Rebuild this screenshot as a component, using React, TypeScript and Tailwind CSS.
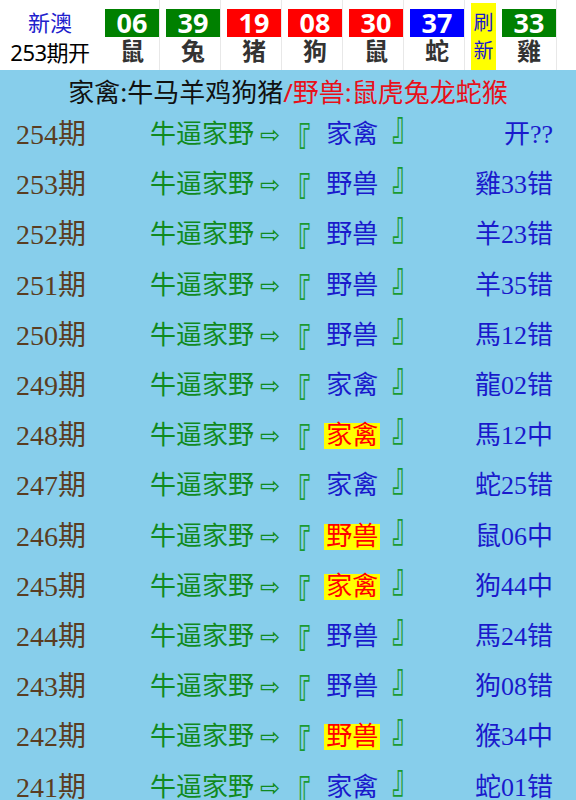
const balls = [
  { n: '06', a: '鼠', c: 'bg-[#008000]' },
  { n: '39', a: '兔', c: 'bg-[#008000]' },
  { n: '19', a: '猪', c: 'bg-[#ff0000]' },
  { n: '08', a: '狗', c: 'bg-[#ff0000]' },
  { n: '30', a: '鼠', c: 'bg-[#ff0000]' },
  { n: '37', a: '蛇', c: 'bg-[#0000ff]' },
]

const rows = [
  { qi: '254', pick: '家禽', hit: false, res: '开??' },
  { qi: '253', pick: '野兽', hit: false, res: '雞33错' },
  { qi: '252', pick: '野兽', hit: false, res: '羊23错' },
  { qi: '251', pick: '野兽', hit: false, res: '羊35错' },
  { qi: '250', pick: '野兽', hit: false, res: '馬12错' },
  { qi: '249', pick: '家禽', hit: false, res: '龍02错' },
  { qi: '248', pick: '家禽', hit: true, res: '馬12中' },
  { qi: '247', pick: '家禽', hit: false, res: '蛇25错' },
  { qi: '246', pick: '野兽', hit: true, res: '鼠06中' },
  { qi: '245', pick: '家禽', hit: true, res: '狗44中' },
  { qi: '244', pick: '野兽', hit: false, res: '馬24错' },
  { qi: '243', pick: '野兽', hit: false, res: '狗08错' },
  { qi: '242', pick: '野兽', hit: true, res: '猴34中' },
  { qi: '241', pick: '家禽', hit: false, res: '蛇01错' },
]

function Ball({ n, a, c }: { n: string; a: string; c: string }) {
  return (
    <div className="w-[55px] flex flex-col border-r border-[#e8e8e8]">
      <div className={`${c} h-[28px] mt-[9px] flex items-center justify-center text-white font-bold text-[27px] leading-[28px]`}>
        {n}
      </div>
      <div className="h-[28px] flex items-center justify-center text-[#333] font-bold text-[24px] leading-[28px]">
        {a}
      </div>
    </div>
  )
}

export default function App() {
  return (
    <div className="w-[576px] h-[800px] overflow-hidden bg-[#87ceeb]" style={{ fontFamily: '"Noto Sans", "Noto Sans CJK SC", sans-serif' }}>
      {/* 开奖头部 */}
      <div className="h-[70px] bg-white flex">
        <div className="w-[100px] flex flex-col items-center pt-[7px]">
          <div className="text-[#2020cc] text-[22px] leading-[30px]">新澳</div>
          <div className="text-black text-[22px] leading-[30px] tracking-[-0.5px]">253期开</div>
        </div>
        <div className="flex gap-[6px] ml-[5px]">
          {balls.map((b, i) => (
            <Ball key={i} {...b} />
          ))}
          <div className="w-[25px] h-[67px] mt-[3px] bg-[#ffff00] flex flex-col items-center justify-center text-[#1a1acc] text-[20px] leading-[28px]">
            <span>刷</span>
            <span>新</span>
          </div>
          <Ball n="33" a="雞" c="bg-[#008000]" />
        </div>
      </div>

      {/* 家禽 / 野兽 */}
      <div className="h-[40px] flex items-center justify-center text-[26px] leading-none pt-[4px]">
        <span className="text-[#111]">家禽:牛马羊鸡狗猪</span>
        <span className="text-[#e8101a]">/野兽:鼠虎兔龙蛇猴</span>
      </div>

      {/* 期数列表 */}
      <div style={{ fontFamily: '"Liberation Serif", "Noto Sans CJK SC", serif' }}>
        {rows.map((r) => (
          <div key={r.qi} className="h-[50.2px] flex items-center pl-[16px] pr-[23px] text-[26px] leading-none">
            <span className="w-[134px] text-[28px] text-[#5a3d22]">{r.qi}期</span>
            <span className="text-[#108a20] flex items-center">
              牛逼家野
              <span className="text-[24px] ml-[6px] mr-[4px]" style={{ fontFamily: '"DejaVu Sans", sans-serif' }}>⇨</span>
              <span className="inline-block font-bold text-[#1a9a30] scale-y-150 origin-top translate-y-[2px]">『</span>
              <span
                className={`ml-[14px] mr-[12px] px-[2px] ${r.hit ? 'bg-[#ffff00] text-[#ff0000]' : 'text-[#1a1acc]'}`}
              >
                {r.pick}
              </span>
              <span className="inline-block font-bold text-[#1a9a30] scale-y-150 origin-bottom -translate-y-[2px]">』</span>
            </span>
            <span className="ml-auto text-[#1a1acc]">{r.res}</span>
          </div>
        ))}
      </div>
    </div>
  )
}
